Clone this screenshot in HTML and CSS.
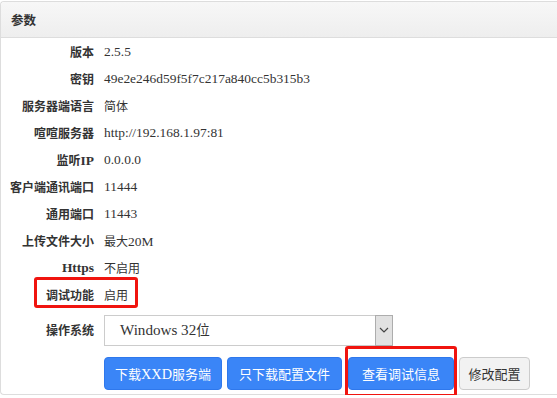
FILE: index.html
```html
<!DOCTYPE html>
<html lang="zh-CN">
<head>
  <meta charset="UTF-8">
  <title>参数</title>
  <link rel="stylesheet" href="styles.css">
</head>
<body>

  <div class="panel">
    <div class="panel-heading">参数</div>

    <div class="panel-body">
      <div class="row"><div class="label">版本</div><div class="value en">2.5.5</div></div>
      <div class="row"><div class="label">密钥</div><div class="value en">49e2e246d59f5f7c217a840cc5b315b3</div></div>
      <div class="row"><div class="label">服务器端语言</div><div class="value">简体</div></div>
      <div class="row"><div class="label">喧喧服务器</div><div class="value en">http://192.168.1.97:81</div></div>
      <div class="row"><div class="label">监听<span class="en">IP</span></div><div class="value en">0.0.0.0</div></div>
      <div class="row"><div class="label">客户端通讯端口</div><div class="value en">11444</div></div>
      <div class="row"><div class="label">通用端口</div><div class="value en">11443</div></div>
      <div class="row"><div class="label">上传文件大小</div><div class="value">最大<span class="en">20M</span></div></div>
      <div class="row"><div class="label"><span class="en">Https</span></div><div class="value">不启用</div></div>
      <div class="row"><div class="label">调试功能</div><div class="value">启用</div></div>

      <div class="row row-select">
        <div class="label">操作系统</div>
        <div class="select">
          <div class="select-text"><span class="en">Windows 32</span>位</div>
          <div class="select-arrow">
            <svg width="10" height="6" viewBox="0 0 10 6"><path d="M1 1 L5 5 L9 1" fill="none" stroke="#444" stroke-width="1.2"/></svg>
          </div>
        </div>
      </div>

      <div class="actions">
        <button class="btn btn-primary btn-download">下载<span class="en">XXD</span>服务端</button>
        <button class="btn btn-primary btn-config">只下载配置文件</button>
        <button class="btn btn-primary btn-debug">查看调试信息</button>
        <button class="btn btn-edit">修改配置</button>
      </div>
    </div>

    <!-- annotation boxes -->
    <div class="mark mark-debug-row"></div>
    <div class="mark mark-debug-btn"></div>
  </div>

</body>
</html>
```

FILE: styles.css
```css
html, body {
  margin: 0;
  background: #fff;
  overflow: hidden;
}

body {
  font-family: 'Liberation Serif', 'Noto Sans CJK SC', serif;
  font-size: 12px;
  color: #333;
}

.en {
  font-size: 1.12em;
}

.panel {
  position: relative;
  margin-top: 1px;
  border: 1px solid #ddd;
  border-right: none;
  border-radius: 4px 0 0 4px;
}

.panel-heading {
  height: 35px;
  line-height: 35px;
  padding-left: 10px;
  font-family: 'Noto Sans CJK SC', sans-serif;
  font-size: 12.5px;
  font-weight: bold;
  color: #333;
  background: linear-gradient(#f7f7f7, #eeeeee);
  border-bottom: 1px solid #ddd;
  border-radius: 4px 0 0 0;
}

.panel-body {
  padding-top: 0.5px;
  padding-bottom: 4px;
}

.row {
  display: flex;
  align-items: center;
  height: 27px;
}

.label {
  width: 93px;
  padding-right: 10px;
  text-align: right;
  font-weight: bold;
  white-space: nowrap;
}

.value {
  white-space: nowrap;
}

.row-select {
  height: 31px;
  margin-top: 6px;
}

.select {
  display: flex;
  width: 289px;
  height: 31px;
  box-sizing: border-box;
  border: 1px solid #ccc;
  background: #fff;
}

.select-text {
  flex: 1;
  padding-left: 15px;
  line-height: 29px;
  font-size: 13.5px;
}

.select-arrow {
  width: 16px;
  display: flex;
  align-items: center;
  justify-content: center;
  background: #e1e1e1;
  border: 1px solid #adadad;
  margin: -1px -1px -1px 0;
}

.actions {
  display: flex;
  gap: 5px;
  margin: 11px 0 0 103px;
}

.btn {
  height: 33px;
  padding: 0;
  font-family: 'Liberation Serif', 'Noto Sans CJK SC', serif;
  font-size: 13px;
  color: #333;
  background: #f2f2f2;
  border: 1px solid #ccc;
  border-radius: 4px;
  text-align: center;
  white-space: nowrap;
  cursor: pointer;
}

.btn .en {
  font-size: 1.1em;
}

.btn-primary {
  color: #fff;
  background: #3a85f7;
  border-color: #2f78ec;
}

.btn-download { width: 118px; }
.btn-config { width: 115px; }
.btn-debug { width: 106px; margin-left: 1px; }
.btn-edit { width: 71px; }

.mark {
  position: absolute;
  border: 3px solid #f0140f;
  border-radius: 3px;
  box-sizing: border-box;
}

.mark-debug-row {
  left: 33px;
  top: 275px;
  width: 104px;
  height: 31px;
}

.mark-debug-btn {
  left: 344px;
  top: 344px;
  width: 112px;
  height: 51px;
}
```
